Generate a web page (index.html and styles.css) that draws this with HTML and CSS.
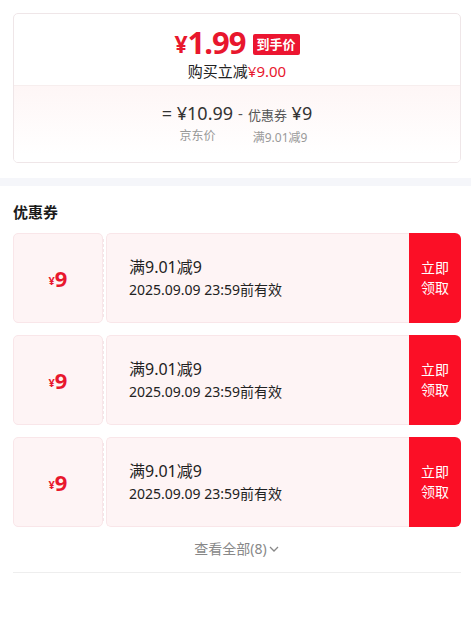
FILE: index.html
```html
<!DOCTYPE html>
<html lang="zh-CN">
<head>
    <meta charset="UTF-8">
    <meta name="viewport" content="width=device-width, initial-scale=1.0">
    <title>优惠券</title>
    <link rel="stylesheet" href="styles.css">
</head>
<body>

<div class="wrap">
    <div class="priceCard">
        <div class="priceTop">
            <div class="finalPrice">
                <span class="yen">¥</span><span class="num">1.99</span>
                <span class="badge">到手价</span>
            </div>
            <div class="saving">购买立减<span class="red">¥9.00</span></div>
        </div>
        <div class="priceBottom">
            <div class="formula">
                <div class="term">
                    <div class="val">= ¥10.99</div>
                    <div class="lbl">京东价</div>
                </div>
                <div class="minus">-</div>
                <div class="term">
                    <div class="val"><span class="small">优惠券</span> ¥9</div>
                    <div class="lbl">满9.01减9</div>
                </div>
            </div>
        </div>
    </div>
</div>

<div class="band"></div>

<div class="wrap">
    <h3 class="title">优惠券</h3>

    <div class="coupon">
        <div class="cLeft"><span class="cy">¥</span>9</div>
        <div class="cRight">
            <div class="cName">满9.01减9</div>
            <div class="cDate">2025.09.09 23:59前有效</div>
        </div>
        <button class="cBtn">立即<br>领取</button>
    </div>

    <div class="coupon">
        <div class="cLeft"><span class="cy">¥</span>9</div>
        <div class="cRight">
            <div class="cName">满9.01减9</div>
            <div class="cDate">2025.09.09 23:59前有效</div>
        </div>
        <button class="cBtn">立即<br>领取</button>
    </div>

    <div class="coupon">
        <div class="cLeft"><span class="cy">¥</span>9</div>
        <div class="cRight">
            <div class="cName">满9.01减9</div>
            <div class="cDate">2025.09.09 23:59前有效</div>
        </div>
        <button class="cBtn">立即<br>领取</button>
    </div>

    <div class="more">查看全部(8)<svg width="12" height="12" viewBox="0 0 12 12"><path d="M2 4 L6 8 L10 4" fill="none" stroke="#888" stroke-width="1.3"/></svg></div>
    <div class="line"></div>
</div>

</body>
</html>
```

FILE: styles.css
```css
body {
    font-family: "Noto Sans", "Noto Sans CJK SC", sans-serif;
    background-color: #fff;
    color: #1a1a1a;
    margin: 0;
    padding: 0;
}
.wrap {
    padding: 13px 10px 0 13px;
}
.priceCard {
    border: 1px solid #efe6e8;
    border-radius: 5px;
    overflow: hidden;
}
.priceTop {
    height: 71px;
    border-bottom: 1px solid #f7eeee;
    text-align: center;
}
.finalPrice {
    display: flex;
    justify-content: center;
    align-items: center;
    height: 47px;
    padding-top: 9px;
    box-sizing: border-box;
    color: #e8172d;
    font-weight: bold;
    line-height: 1;
}
.finalPrice .yen {
    font-size: 23px;
    margin-top: 5px;
}
.finalPrice .num {
    font-size: 31px;
    letter-spacing: -1px;
}
.badge {
    background-color: #ec1530;
    color: #fff;
    font-size: 13px;
    padding: 4px 4px;
    border-radius: 2px;
    margin-left: 7px;
    margin-top: 4px;
}
.saving {
    font-size: 15px;
    line-height: 20px;
    color: #222;
}
.red {
    color: #e8172d;
}
.priceBottom {
    background: linear-gradient(#fef6f6, #fff 90%);
    height: 76px;
}
.formula {
    display: flex;
    justify-content: center;
    padding-top: 14px;
}
.term {
    text-align: center;
}
.val {
    font-size: 18px;
    color: #333;
    line-height: 26px;
}
.val .small {
    font-size: 13px;
    color: #555;
}
.lbl {
    font-size: 12px;
    color: #999;
    line-height: 20px;
}
.minus {
    font-size: 15px;
    color: #555;
    line-height: 26px;
    padding: 0 5px;
}
.band {
    height: 8px;
    background-color: #f5f6fa;
    margin-top: 15px;
}
.title {
    font-size: 15px;
    font-weight: bold;
    margin: 0 0 10px;
    line-height: 22px;
    padding-top: 2px;
}
.coupon {
    display: flex;
    height: 90px;
    margin-bottom: 12px;
    position: relative;
}
.cLeft {
    width: 90px;
    box-sizing: border-box;
    background-color: #fef4f5;
    border: 1px solid #f9e6e9;
    border-radius: 5px;
    display: flex;
    justify-content: center;
    align-items: center;
    color: #e8172d;
    font-weight: bold;
    font-size: 22px;
}
.cy {
    font-size: 11px;
    margin-top: 5px;
}
.cLeft::after {
    content: "";
    position: absolute;
    left: 90px;
    top: 6px;
    bottom: 6px;
    border-left: 1px dashed #f3e6e8;
}
.cRight {
    flex: 1;
    margin-left: 3px;
    background-color: #fef4f5;
    border: 1px solid #f9e6e9;
    border-right: none;
    border-radius: 5px 0 0 5px;
    padding-left: 22px;
    display: flex;
    flex-direction: column;
    justify-content: center;
}
.cName {
    font-size: 16px;
    line-height: 23px;
    color: #222;
}
.cDate {
    font-size: 14px;
    line-height: 22px;
    color: #222;
}
.cBtn {
    width: 52px;
    background-color: #fb0f26;
    color: #fff;
    border: none;
    border-radius: 0 6px 6px 0;
    font-family: inherit;
    font-size: 14px;
    line-height: 20px;
    padding: 0;
    cursor: pointer;
}
.more {
    text-align: center;
    font-size: 14px;
    color: #888;
    line-height: 20px;
    margin-top: 11px;
}
.more svg {
    vertical-align: -1px;
    margin-left: 1px;
}
.line {
    height: 1px;
    background-color: #eee;
    margin-top: 13px;
}
```
